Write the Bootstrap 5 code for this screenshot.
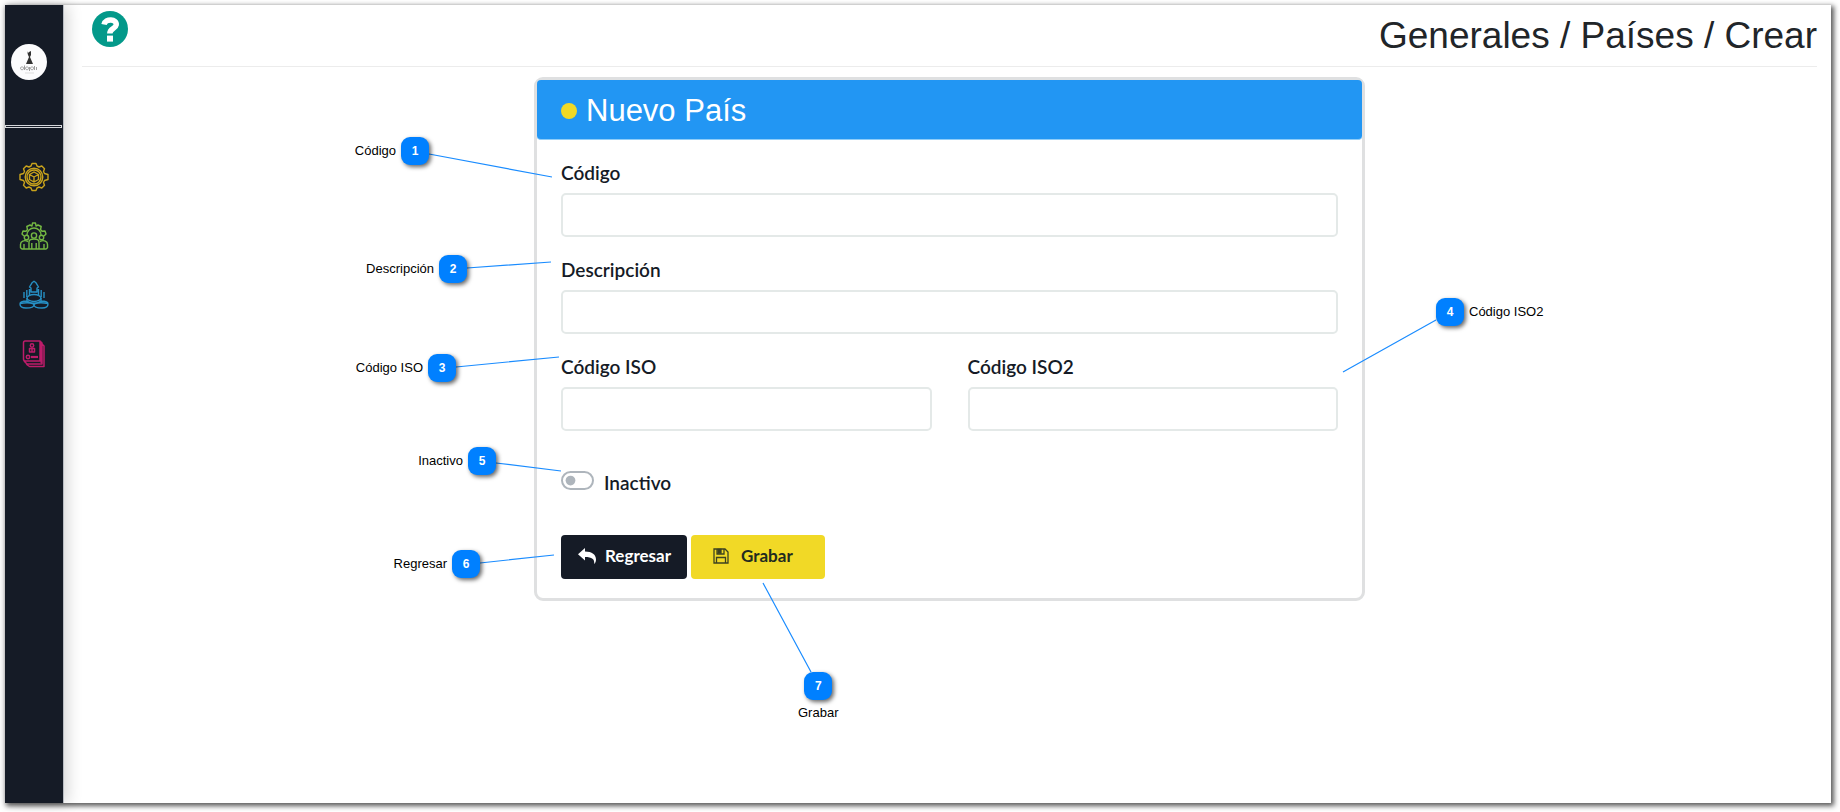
<!DOCTYPE html>
<html lang="es">
<head>
<meta charset="utf-8">
<meta name="viewport" content="width=device-width, initial-scale=1">
<title>Generales / Países / Crear</title>
<link href="https://cdn.jsdelivr.net/npm/bootstrap@5.3.0/dist/css/bootstrap.min.css" rel="stylesheet">
<style>
  body { font-family: Lato, sans-serif; color: #151b26; background: #fff; }
  .page { min-height: 100vh; padding: 5px 9px 9px 5px; }
  .app-window { background: #fff; box-shadow: 2px 2px 5px 1px rgba(0,0,0,.65); }
  .sidebar { width: 59px; background: #151b26; border-right: 1px solid #b8bcc2; box-shadow: 4px 0 14px rgba(0,0,0,.16); z-index: 1; }
  .brand { width: 36px; height: 36px; margin: 39px 0 0 6px; }
  .divider { width: 57px; height: 3px; margin: 45px 0 34px; border: 1px solid #d5d7da; }
  .menu { gap: 29px; padding-left: 14px; }
  .menu svg, .brand svg, .help svg { display: block; }
  .content { padding: 0 14px 0 18px; }
  .topbar { height: 62px; border-bottom: 1px solid #ececec; padding-left: 10px; }
  .help { margin-top: 6px; }
  .path-title { font: 400 37px/44px "Liberation Sans", Arial, sans-serif; margin: 9px 0 0; color: #212529; }
  .form-holder { width: 100%; max-width: 831px; margin: 10px auto 0; }
  .form-card { border: 3px solid #dfe0e1; border-radius: 9px; }
  .form-head { height: 60px; background: #2296f3; border-radius: 4px; padding: 2px 24px 0; gap: 9px; border-bottom: 1px solid #8fcdf8; }
  .form-head h2 { font: 400 31px/40px "Liberation Sans", Arial, sans-serif; color: #fff; margin: 0; }
  .dot { width: 16px; height: 16px; border-radius: 50%; background: #f1d926; }
  .form-body { padding: 19px 24px 19px; }
  .form-label, .form-check-label { font-size: 19px; line-height: 28px; font-weight: 600; margin: 0; }
  .form-label { margin-bottom: 6px; }
  .form-control { height: 44px; border: 2px solid #e4e9e8; border-radius: 5px; }
  .fields { row-gap: 19px; --bs-gutter-x: 36px; }
  .switch-row { margin: 38px 0 41px; gap: 10px; height: 22px; }
  .form-switch .form-check-input { width: 33px; height: 19px; margin: 2px 0 0; border: 2px solid #aeb5bc;
    background-image: url("data:image/svg+xml,%3csvg xmlns='http://www.w3.org/2000/svg' viewBox='-4 -4 8 8'%3e%3ccircle r='2.6' fill='%23aeb5bc'/%3e%3c/svg%3e"); }
  .form-actions { gap: 4px; margin-top: 44px; }
  .form-actions .btn { height: 44px; border: 0; border-radius: 4px; font-size: 17px; line-height: 28px; padding: 0 16px 2px 17px; display: flex; align-items: center; gap: 9px; }
  .btn-back, .btn-back:hover { background: #151b26; color: #fff; font-weight: 700; }
  .form-actions .btn-save, .form-actions .btn-save:hover { background: #f1d926; color: #222b20; font-weight: 700; padding: 0 32px 2px 22px; gap: 12px; }
  .callout { position: absolute; display: flex; align-items: center; gap: 5px; white-space: nowrap; font: 13px/16px "Liberation Sans", Arial, sans-serif; color: #000; }
  .num { width: 28px; height: 28px; border-radius: 9px; background: #0080ff; color: #fff; font-size: 12px; font-weight: 700; line-height: 28px; text-align: center; box-shadow: 2px 2px 4px rgba(0,0,0,.6); }
  .lines { position: absolute; left: 0; top: 0; overflow: visible; pointer-events: none; }
  .c1 { top: 60px; right: calc(100% + 105px); }
  .c2 { top: 178px; right: calc(100% + 67px); }
  .c3 { top: 277px; right: calc(100% + 78px); }
  .c4 { top: 221px; left: calc(100% + 71px); }
  .c5 { top: 370px; right: calc(100% + 38px); }
  .c6 { top: 473px; right: calc(100% + 54px); }
  .c7 { top: 595px; left: 264px; flex-direction: column; }
</style>
</head>
<body>
<div class="page d-flex">
  <div class="app-window d-flex flex-fill">
    <nav class="sidebar flex-shrink-0" aria-label="Menú principal">
      <a class="brand d-block" href="#" aria-label="Inicio">
        <svg width="36" height="36" viewBox="0 0 36 36"><circle cx="18" cy="18" r="18" fill="#fcfcfd"/><path d="M16 7l1 2 1-1 2-1v4l-1 2 3 7h-7l3-7-1-2z" fill="#333"/><path d="M11 22.800a1.500 1.500 0 1 0 .1 0M13.500 21.500v4.500M16 22.800a1.500 1.500 0 1 0 .1 0M18.500 23v4M21 22.800a1.500 1.500 0 1 0 .1 0M23.500 22v4M25.500 23v3" stroke="#888" stroke-width=".8" fill="none"/><path d="M14 29h9" stroke="#ddd"/></svg>
      </a>
      <div class="divider"></div>
      <div class="menu d-flex flex-column">
        <a href="#" aria-label="Generales"><svg width="30" height="30" viewBox="0 0 30 30" fill="none" stroke="#c9a31c" stroke-width="1.400" stroke-linejoin="round"><path d="M12 4L13 1.500h4L18 4l2 1 2.800-1 2.700 2.700-1 2.800 1 2 3.500 1v5l-3.500 1-1 2 1 2.800-2.700 2.700L20 25l-2 1-1 2.500h-4L12 26l-2-1-2.800 1-2.700-2.700 1-2.800-1-2L1 17.500v-5l3.500-1 1-2-1-2.800L7.200 4 10 5z"/><circle cx="15" cy="15" r="8.800"/><circle cx="15" cy="15" r="7"/><path d="M10.500 12.500L15 10l4.500 2.500v5L15 20l-4.500-2.500zM10.500 12.500L15 15l4.500-2.500M15 15v5"/></svg></a>
        <a href="#" aria-label="Equipo"><svg width="30" height="30" viewBox="0 0 30 30" fill="none" stroke="#74b843" stroke-width="1.400" stroke-linejoin="round"><path d="M5 15l-2-2 1-3 3 .3 1.500-1.800-.7-3L11 4l2 1 .500-3h3l.500 3 2-1 3.200 1.500-.7 3L23 10.300l3-.3 1 3-2 2"/><path d="M8 14a7 7 0 0 1 14 0"/><circle cx="15" cy="14.500" r="2.600"/><circle cx="7.500" cy="16.500" r="2.200"/><circle cx="22.500" cy="16.500" r="2.200"/><path d="M10 28v-7c0-4 10-4 10 0v7zM12.800 22v6M17.200 22v6M9 20.500c-4-2-7.500 0-7.500 3v3.200L3 28h7M21 20.500c4-2 7.500 0 7.500 3v3.200L27 28h-7M5 23v5M25 23v5"/></svg></a>
        <a href="#" aria-label="Bienestar"><svg width="30" height="30" viewBox="0 0 30 30" fill="none" stroke="#268fc3" stroke-width="1.400" stroke-linejoin="round"><path d="M12 12V8l-1.500-1L13 2.800l2-1.500 2 1.500L19.500 7 18 8v4zM10.500 9v6M7.800 10v7M5 12v6M19.500 9v6M22.200 10v7M25 12v6"/><ellipse cx="15" cy="18" rx="7" ry="3.500"/><path d="M8 18v3c3 3 11 3 14 0v-3M8 21c-5 0-7 1-7 3s2 4 6 4c5 0 8-1 8-3s-6-3-14-1.500M22 21c5 0 7 1 7 3s-2 4-6 4c-5 0-8-1-8-3s6-3 14-1.500"/></svg></a>
        <a href="#" aria-label="Catálogo"><svg width="30" height="30" viewBox="0 0 30 30" fill="none" stroke="#bd1c6a" stroke-width="1.500" stroke-linejoin="round"><path d="M6 2h15v20H6.500C5 22 4.500 21.500 4.500 20V4c0-1 .5-2 1.500-2zM21 2l2 2v21H8l-3-3M23 5l2 2v20.500H10.500L7 25M22.200 3v21" /><circle cx="13" cy="6.500" r="1.700"/><path d="M10.500 9.500h5v3.500h-5zM13 9.500V13"/><circle cx="9" cy="18" r="1.700"/><path d="M12 18h7" stroke-width="2.200"/></svg></a>
      </div>
    </nav>

    <main class="content flex-fill">
      <header class="topbar d-flex justify-content-between align-items-start">
        <a class="help" href="#" aria-label="Ayuda"><svg width="36" height="36" viewBox="0 0 36 36"><circle cx="18" cy="18" r="18" fill="#03998a"/><path d="M12 13.500c1.500-6.500 13-5.800 12.200.3-.6 4-6.400 3.500-6.400 8.700" fill="none" stroke="#fff" stroke-width="5.500"/><path d="M15 24.600h6v6h-6z" fill="#fff"/></svg></a>
        <h1 class="path-title">Generales / Países / Crear</h1>
      </header>

      <div class="form-holder position-relative">
        <form class="form-card">
          <div class="form-head d-flex align-items-center"><span class="dot"></span><h2>Nuevo País</h2></div>
          <div class="form-body">
            <div class="row fields">
              <div class="col-12"><label class="form-label d-block" for="codigo">Código</label><input class="form-control" id="codigo" type="text"></div>
              <div class="col-12"><label class="form-label d-block" for="descripcion">Descripción</label><input class="form-control" id="descripcion" type="text"></div>
              <div class="col-6"><label class="form-label d-block" for="iso">Código ISO</label><input class="form-control" id="iso" type="text"></div>
              <div class="col-6"><label class="form-label d-block" for="iso2">Código ISO2</label><input class="form-control" id="iso2" type="text"></div>
            </div>
            <div class="switch-row form-switch d-flex p-0">
              <input class="form-check-input float-none" type="checkbox" role="switch" id="inactivo">
              <label class="form-check-label" for="inactivo">Inactivo</label>
            </div>
            <div class="form-actions d-flex">
              <button class="btn btn-back" type="button"><svg width="18" height="16" viewBox="0 0 18 16" fill="#fff"><path d="M7 0v3.500c7 0 11 3 11 8 0 2-.8 3.500-1.800 4.500.5-5-2.200-7-9.200-7v3.500L0 6.200z"/></svg>Regresar</button>
              <button class="btn btn-save" type="submit"><svg width="16" height="16" viewBox="0 0 16 16" fill="none" stroke="#3d4220" stroke-width="1.300"><path d="M1 1h11l3 3v11H1zM3.500 15V9.500h9V15M4 1v5h7V1"/><path d="M5 1.500h3V5H5z" fill="#3d4220"/></svg>Grabar</button>
            </div>
          </div>
        </form>

        <svg class="lines" width="1" height="1" stroke="#1a8cff" stroke-width="1.200" aria-hidden="true">
          <path d="M-105 77L18 100M-67 191L17 185M-78 290L25 280M902 243L809 295M-38 386L27 394M-54 486L20 478M277 595L229 506"/>
        </svg>
        <div class="callout c1"><span>Código</span><span class="num">1</span></div>
        <div class="callout c2"><span>Descripción</span><span class="num">2</span></div>
        <div class="callout c3"><span>Código ISO</span><span class="num">3</span></div>
        <div class="callout c4"><span class="num">4</span><span>Código ISO2</span></div>
        <div class="callout c5"><span>Inactivo</span><span class="num">5</span></div>
        <div class="callout c6"><span>Regresar</span><span class="num">6</span></div>
        <div class="callout c7"><span class="num">7</span><span>Grabar</span></div>
      </div>
    </main>
  </div>
</div>
<script src="https://cdn.jsdelivr.net/npm/bootstrap@5.3.0/dist/js/bootstrap.bundle.min.js"></script>
</body>
</html>
